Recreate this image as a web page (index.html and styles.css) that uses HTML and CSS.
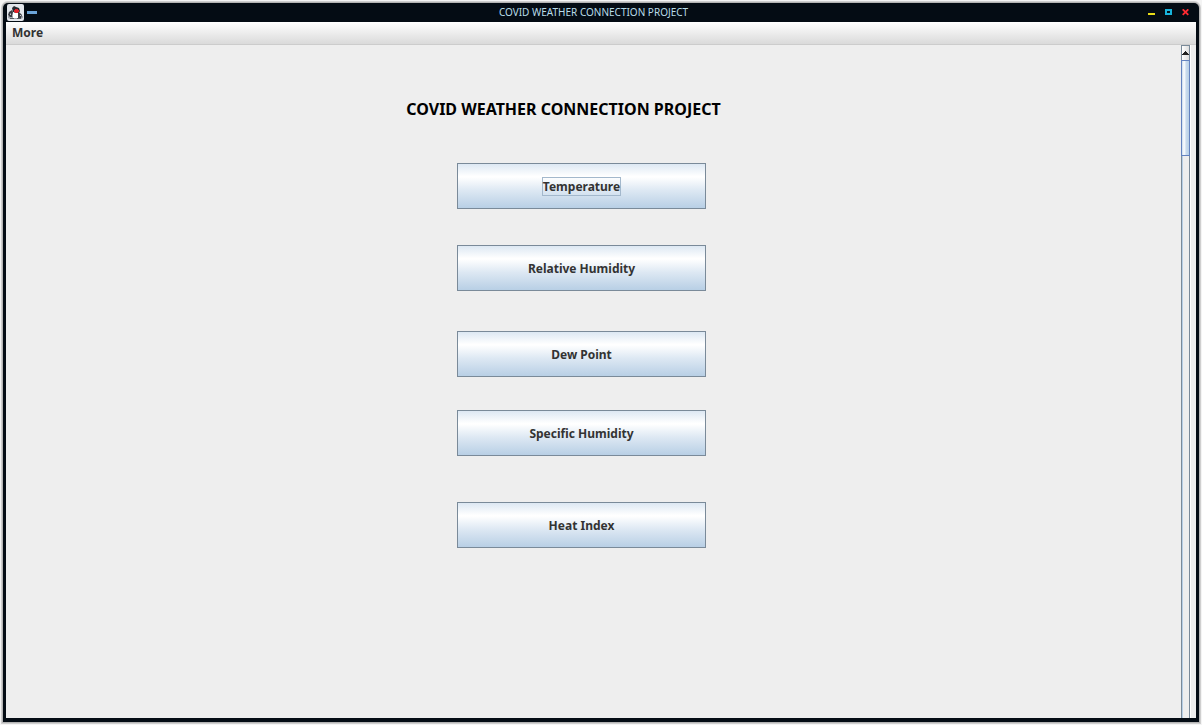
FILE: index.html
```html
<!DOCTYPE html>
<html lang="en">
<head>
<meta charset="utf-8">
<title>COVID WEATHER CONNECTION PROJECT</title>
<link rel="stylesheet" href="styles.css">
</head>
<body>
<div class="window">
  <header class="titlebar">
    <div class="title-side">
      <svg class="app-icon" viewBox="0 0 17 17" aria-hidden="true">
        <rect width="17" height="17" rx="2" fill="#e3e6eb"/>
        <path d="M1 12h15v2l-2 1H3l-2-1z" fill="#a4a8b0"/>
        <path d="M5 4l2-2 2 1 3 1 1 3-1 2H8L6 8z" fill="#26292f"/>
        <path d="M2 8l3-2 1 2-1 5H3L1 11zM11 8l2 1 2 2-1 3h-3z" fill="#3b3e45"/>
        <path d="M6 8l2 1 3 0v5H6z" fill="#fff"/>
        <path d="M3 9l1 1v1H3zM13 11h1v1h-1z" fill="#c9ccd2"/>
        <path d="M8 5h3v1h1v2h-1v1H8V8H7V6h1z" fill="#e0222b"/>
        <path d="M3 14.500h4M10 14.500h4" stroke="#55585e"/>
      </svg>
      <svg class="stick-icon" viewBox="0 0 10 3" aria-hidden="true"><path d="M0 0h10v3H0z" fill="#6ba4d8"/></svg>
    </div>
    <div class="window-title">COVID WEATHER CONNECTION PROJECT</div>
    <div class="title-side controls">
      <button class="control" type="button" aria-label="Minimize"><svg viewBox="0 0 7 7"><path d="M0 4h7v2H0z" fill="#e8dc18"/></svg></button>
      <button class="control" type="button" aria-label="Maximize"><svg viewBox="0 0 7 7"><path d="M0 0h7v6H0zM2 2v2h3V2z" fill="#18b4dc" fill-rule="evenodd"/></svg></button>
      <button class="control" type="button" aria-label="Close"><svg viewBox="0 0 7 7"><path d="M.7.3l5.600 5.600M6.300.3l-5.600 5.600" stroke="#ff2b32" stroke-width="1.800"/></svg></button>
    </div>
  </header>
  <nav class="menubar"><button class="menu" type="button">More</button></nav>
  <div class="body">
    <main class="content">
      <h1 class="heading">COVID WEATHER CONNECTION PROJECT</h1>
      <div class="choices">
        <button class="choice" type="button"><span class="label focused">Temperature</span></button>
        <button class="choice humidity" type="button"><span class="label">Relative Humidity</span></button>
        <button class="choice dew" type="button"><span class="label">Dew Point</span></button>
        <button class="choice specific" type="button"><span class="label">Specific Humidity</span></button>
        <button class="choice heat" type="button"><span class="label">Heat Index</span></button>
      </div>
    </main>
    <div class="scrollbar">
      <button class="scroll-up" type="button" aria-label="Scroll up"><svg viewBox="0 0 7 4"><path d="M3 0h1v1h1v1h1v1h1v1H0V3h1V2h1V1h1z" fill="#222"/></svg></button>
      <div class="thumb"></div>
    </div>
  </div>
</div>
</body>
</html>
```
FILE: styles.css
```css
* {
  box-sizing: border-box;
}

body {
  margin: 0;
  height: 100vh;
  padding: 3px;
  background: #f4f4f4;
  font-family: "Noto Sans", sans-serif;
  color: #333;
}

button {
  margin: 0;
  padding: 0;
  border: 0;
  background: none;
  font: inherit;
  color: inherit;
}

svg {
  display: block;
}

.window {
  display: flex;
  flex-direction: column;
  height: 100%;
  padding: 0 3px 4px;
  border-radius: 5px 5px 0 0;
  background: #040c14;
  box-shadow: 0 0 0 1px #b4b4b4, 0 0 0 2px #cfcfcf;
}

.titlebar {
  display: flex;
  align-items: center;
  height: 19px;
  flex: none;
}

.title-side {
  display: flex;
  align-items: center;
  gap: 3px;
  width: 60px;
  padding-left: 1px;
}

.app-icon {
  width: 17px;
  height: 17px;
}

.stick-icon {
  width: 10px;
  height: 3px;
}

.window-title {
  flex: 1;
  padding: 0 15px 2px 0;
  font-size: 10px;
  line-height: 16px;
  text-align: center;
  color: #b9dce8;
}

.controls {
  justify-content: flex-end;
  gap: 10px;
  padding: 0 7px 0 0;
}

.control,
.control svg {
  width: 7px;
  height: 7px;
}

.menubar {
  flex: none;
  height: 23px;
  padding-left: 6px;
  border-bottom: 1px solid #ccc;
  background: linear-gradient(#fff, #dadada);
}

.menu {
  display: block;
  font-size: 12px;
  font-weight: 700;
  line-height: 21px;
}

.body {
  display: flex;
  flex: 1;
  min-height: 0;
  background: #eee;
}

.content {
  flex: 1;
  padding-top: 53px;
}

.heading {
  margin: 0;
  padding-right: 60px;
  font-size: 16px;
  line-height: 22px;
  text-align: center;
  color: #000;
}

.choices {
  display: flex;
  flex-direction: column;
  align-items: center;
  padding: 43px 24px 0 0;
}

.choice {
  width: 249px;
  height: 46px;
  border: 1px solid #7a8a99;
  background: linear-gradient(#dde8f3, #fff 28%, #fff 30%, #dde8f3 60%, #b8cfe5);
  font-size: 12px;
  font-weight: 700;
  line-height: 17px;
}

.label {
  display: inline-block;
  border: 1px solid transparent;
}

.focused {
  border-color: #a3b8cc;
}

.humidity {
  margin-top: 36px;
}

.dew {
  margin-top: 40px;
}

.specific {
  margin-top: 33px;
}

.heat {
  margin-top: 46px;
}

.scrollbar {
  width: 9px;
  margin-right: 6px;
  border: 1px solid #7a8a99;
  border-width: 0 1px;
  box-shadow: inset 1px 0 #b8cfe5, 1px 0 #fff;
}

.scroll-up {
  display: flex;
  align-items: center;
  justify-content: center;
  width: 100%;
  height: 15px;
  border-top: 1px solid #7a8a99;
  background: linear-gradient(90deg, #fff, #ddd);
}

.scroll-up svg {
  width: 7px;
  height: 4px;
}

.thumb {
  height: 96px;
  margin: 0 -1px;
  border: 1px solid #6382bf;
  background: linear-gradient(90deg, #c8dbee, #fff 30%, #c8dbee 60%, #b8cfe5);
}
```
